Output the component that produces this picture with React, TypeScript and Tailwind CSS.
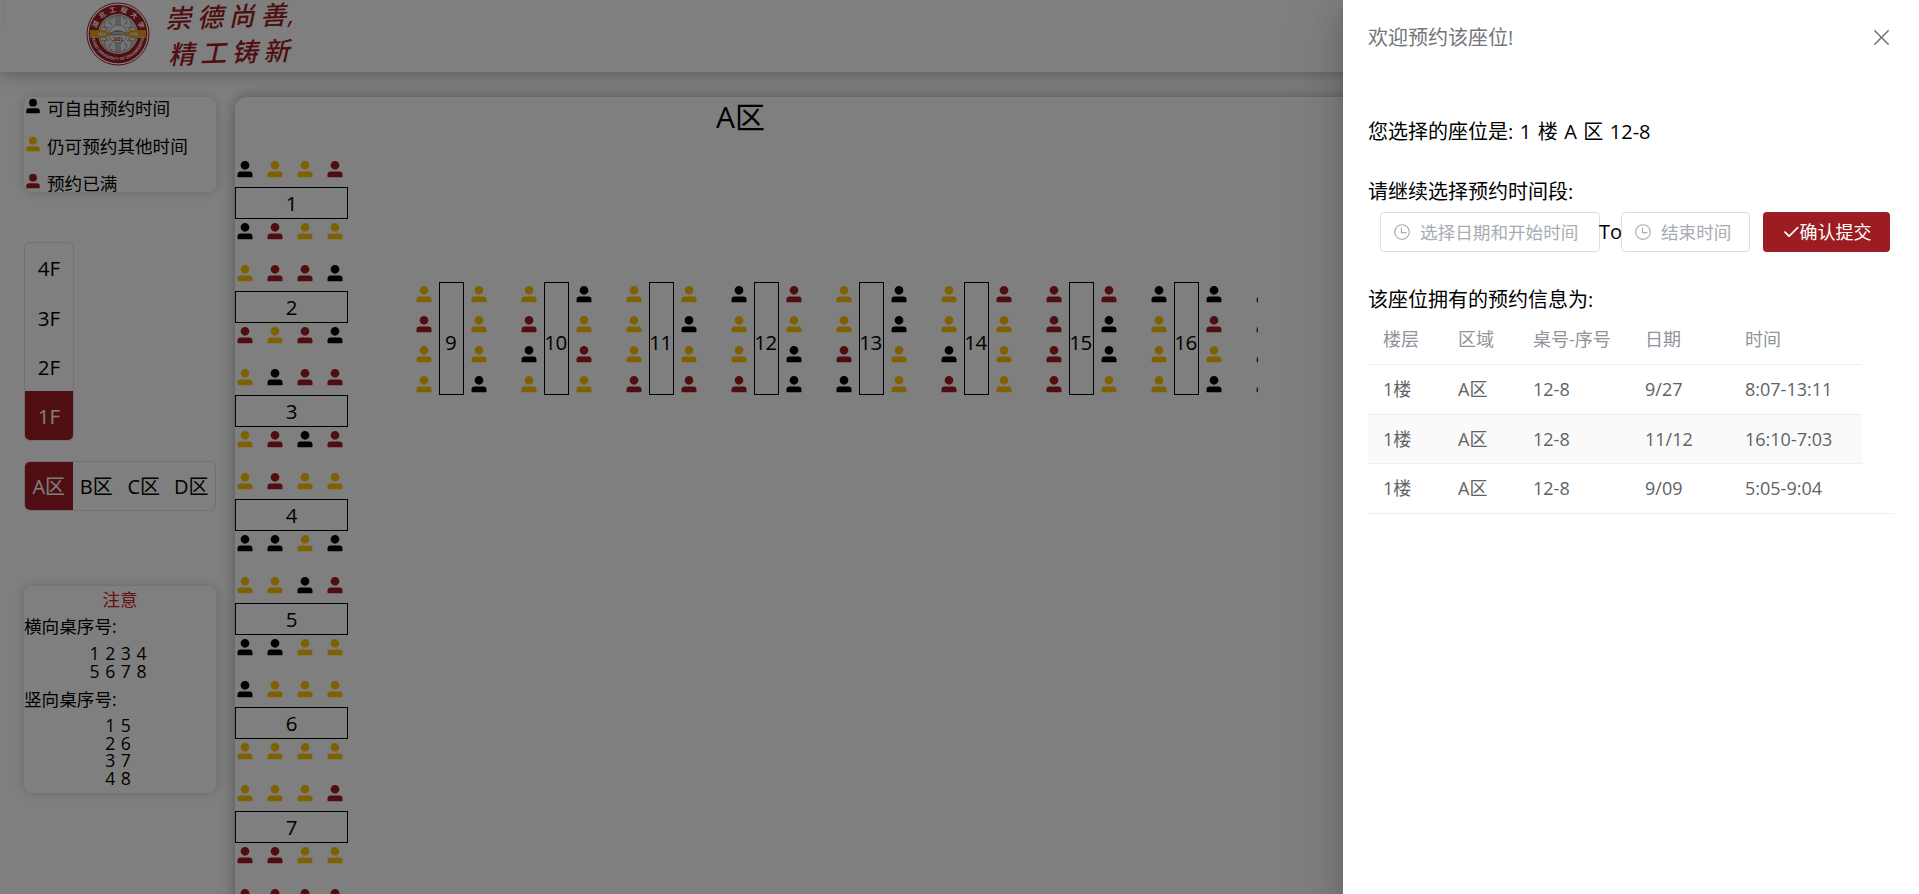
type Status = "k" | "y" | "r";

const STATUS_CLASS: Record<Status, string> = {
  k: "text-black",
  y: "text-[#ffc107]",
  r: "text-[#a01c24]",
};

const ROW_TABLES: [string, string][] = [
  ["kyyr", "kryy"],
  ["yrrk", "ryrk"],
  ["ykrr", "yrkr"],
  ["yryy", "kkyk"],
  ["yykr", "kkyy"],
  ["kyyy", "yyyy"],
  ["yyyr", "rryy"],
  ["rrrr", "yyyy"],
];

const COLUMN_TABLES: [string, string][] = [
  ["yryy", "yyyk"],
  ["yrky", "kyry"],
  ["yyyr", "ykyr"],
  ["kyyr", "rykk"],
  ["yyrk", "kkyy"],
  ["yykr", "ryyy"],
  ["rrrr", "rkky"],
  ["kyyy", "kryk"],
  ["rrrr", "yyyy"],
];

const BOOKINGS = [
  ["1楼", "A区", "12-8", "9/27", "8:07-13:11"],
  ["1楼", "A区", "12-8", "11/12", "16:10-7:03"],
  ["1楼", "A区", "12-8", "9/09", "5:05-9:04"],
];

function Person({ status, size = "size-5" }: { status: Status; size?: string }) {
  return (
    <svg viewBox="0 0 1024 1024" className={`${size} shrink-0 ${STATUS_CLASS[status]}`} fill="currentColor">
      <path d="M288 320a224 224 0 1 0 448 0 224 224 0 1 0-448 0zm544 608H160a32 32 0 0 1-32-32v-96a160 160 0 0 1 160-160h448a160 160 0 0 1 160 160v96a32 32 0 0 1-32 32z" />
    </svg>
  );
}

function Seats({ seats, vertical }: { seats: string; vertical?: boolean }) {
  return (
    <div className={vertical ? "flex flex-col gap-2.5 pt-0.5" : "flex gap-2.5"}>
      {seats.split("").map((s, i) => (
        <Person key={i} status={s as Status} />
      ))}
    </div>
  );
}

function Clock() {
  return (
    <svg viewBox="0 0 1024 1024" className="size-[18px] shrink-0" fill="currentColor">
      <path d="M512 896a384 384 0 1 0 0-768 384 384 0 0 0 0 768zm0 64a448 448 0 1 1 0-896 448 448 0 0 1 0 896z" />
      <path d="M480 256a32 32 0 0 1 32 32v256a32 32 0 0 1-64 0V288a32 32 0 0 1 32-32z" />
      <path d="M480 512h256q32 0 32 32t-32 32H480q-32 0-32-32t32-32z" />
    </svg>
  );
}

function Emblem() {
  return (
    <svg viewBox="0 0 64 64" className="size-16">
      <circle cx="32" cy="32" r="31" fill="#fff" stroke="#a01c24" strokeWidth="1" />
      <circle cx="32" cy="32" r="24.5" fill="none" stroke="#a01c24" strokeWidth="9.5" />
      <circle cx="32" cy="32" r="19.5" fill="#e4e4e0" />
      <g fill="none" stroke="#8f8f8b" strokeWidth="1">
        <circle cx="32" cy="32" r="18.5" />
        <circle cx="32" cy="32" r="9" />
        <path d="M30 14v9M32 14v9M34 14v9M30 41v9M32 41v9M34 41v9M27 16c-5 1-5 7-1 6M37 16c5 1 5 7 1 6M27 48c-5-1-5-7-1-6M37 48c5-1 5-7 1-6M20 20c-4 3 0 8 3 5M44 20c4 3 0 8-3 5M20 44c-4-3 0-8 3-5M44 44c4-3 0-8-3-5M16 26c3-2 6 0 5 2M48 26c-3-2-6 0-5 2M16 38c3 2 6 0 5-2M48 38c-3 2-6 0-5-2" />
      </g>
      <path d="M4 28h17v2h4v4h-4v2H4zM60 28H43v2h-4v4h4v2h17z" fill="#e8a020" />
      <path d="M12 30.500h8v3h-8zM44 30.500h8v3h-8z" fill="#d8cfa8" />
      <circle cx="32" cy="32" r="8.500" fill="#efefec" />
      <path d="M24 31q8-4 16 0v2H24zM28 29h8" fill="#b9b9b4" stroke="#77776f" strokeWidth=".8" />
      <text x="32" y="39" textAnchor="middle" fontSize="4.500" fontWeight="700" fill="#a01c24" fontFamily="Liberation Sans">1931</text>
      <defs>
        <path id="arc-top" d="M9.800 32a22.200 22.200 0 0 1 44.400 0" />
        <path id="arc-bottom" d="M5.700 32a26.300 26.300 0 0 0 52.600 0" />
      </defs>
      <text fontSize="6.500" fill="#fff" fontFamily="Noto Sans CJK SC" fontWeight="700" letterSpacing="3.900">
        <textPath href="#arc-top" startOffset="53%" textAnchor="middle">湖北工程大学</textPath>
      </text>
      <text fontSize="4.100" fill="#fff" fontFamily="Liberation Sans" fontWeight="700">
        <textPath href="#arc-bottom" startOffset="50%" textAnchor="middle">HUBEI UNIVERSITY OF ENGINEERING</textPath>
      </text>
    </svg>
  );
}

function Motto({ text, className }: { text: string[]; className: string }) {
  return (
    <div className={`flex h-9 -skew-x-12 -skew-y-2 text-[26px] leading-9 font-medium text-[#a01c24] ${className}`}>
      {text.map((c) => (
        <span key={c} className="w-[31.500px] whitespace-nowrap">{c}</span>
      ))}
    </div>
  );
}

function TimeInput({ className, placeholder }: { className: string; placeholder: string }) {
  return (
    <div className={`flex h-10 items-center gap-[9px] rounded border border-[#dcdfe6] pl-3 text-[17.6px] whitespace-nowrap text-[#a8abb2] ${className}`}>
      <Clock />
      <span className="leading-5">{placeholder}</span>
    </div>
  );
}

export default function App() {
  return (
    <div className="relative h-[894px] w-[1919px] overflow-hidden bg-white font-['Open_Sans','Noto_Sans_CJK_SC',sans-serif] text-black">
      <header className="flex h-[72px] items-start shadow-[0_2px_16px_rgba(0,0,0,0.3)]">
        <div className="h-[29px] w-[5px] rounded-br-md border-r border-b border-[#f0f0f0]" />
        <div className="pt-0.5 pl-[81px]">
          <Emblem />
        </div>
        <div className="pl-[18px]">
          <Motto text={["崇", "德", "尚", "善,"]} className="-mt-0.5" />
          <Motto text={["精", "工", "铸", "新"]} className="ml-[3px]" />
        </div>
      </header>

      <div className="flex items-start pt-[25px] pl-6">
        <aside className="w-48 shrink-0">
          <div className="h-[95px] rounded-lg text-[17.6px] shadow-[0_0_12px_rgba(0,0,0,0.2)]">
            {([["k", "可自由预约时间"], ["y", "仍可预约其他时间"], ["r", "预约已满"]] as const).map(([s, label]) => (
              <div key={s} className="flex h-[37.500px] items-start">
                <Person status={s} size="size-[18px]" />
                <span className="pl-[5px] leading-[23px]">{label}</span>
              </div>
            ))}
          </div>

          <div className="mt-[50px] flex h-[199px] w-[50px] flex-col overflow-hidden rounded-md border border-[#e2e2e6] text-[20.500px]">
            {["4F", "3F", "2F", "1F"].map((f) => (
              <div key={f} className={`flex flex-1 items-center justify-center pt-0.5 ${f === "1F" ? "bg-[#a01c24] text-white" : ""}`}>{f}</div>
            ))}
          </div>

          <div className="mt-5 flex h-[50px] overflow-hidden rounded-md border border-[#e2e2e6] text-xl">
            {["A区", "B区", "C区", "D区"].map((r) => (
              <div key={r} className={`flex flex-1 items-center justify-center pt-0.5 whitespace-nowrap ${r === "A区" ? "bg-[#a01c24] text-white" : ""}`}>{r}</div>
            ))}
          </div>

          <div className="mt-[75px] h-[207px] rounded-lg text-[17.6px] leading-[17.6px] shadow-[0_0_12px_rgba(0,0,0,0.2)]">
            <div className="pt-[3px] text-center leading-5 text-[#d0202a]">注意</div>
            <div className="pt-[7px] leading-5">横向桌序号:</div>
            <div className="pt-[9px] pr-1 text-center [word-spacing:1px]">1 2 3 4<br />5 6 7 8</div>
            <div className="pt-[9px] leading-5">竖向桌序号:</div>
            <div className="pt-2 pr-1 text-center [word-spacing:1px]">1 5<br />2 6<br />3 7<br />4 8</div>
          </div>
        </aside>

        <main className="ml-[19px] h-[900px] w-[1660px] shrink-0 rounded-xl shadow-[0_0_16px_rgba(0,0,0,0.35)]">
          <h1 className="w-[1011px] pt-0.5 text-center text-[30px] leading-9">A区</h1>
          <div className="flex w-[1023px] items-start overflow-hidden pt-6">
            <div className="flex w-[113px] shrink-0 flex-col gap-[22px]">
              {ROW_TABLES.map(([top, bottom], i) => (
                <div key={i} className="flex flex-col">
                  <Seats seats={top} />
                  <div className="mt-2 mb-0.5 flex h-8 items-center justify-center border border-black text-[20.500px]">{i + 1}</div>
                  <Seats seats={bottom} />
                </div>
              ))}
            </div>
            <div className="flex gap-[30px] pt-[123px] pl-[66px]">
              {COLUMN_TABLES.map(([left, right], i) => (
                <div key={i} className="flex gap-[5px]">
                  <Seats seats={left} vertical />
                  <div className="flex h-[113px] w-[25px] items-center justify-center border border-black pt-2 pr-0.5 text-[20.500px] tracking-[-0.5px]">{i + 9}</div>
                  <Seats seats={right} vertical />
                </div>
              ))}
            </div>
          </div>
        </main>
      </div>

      <div className="absolute inset-0 flex justify-end bg-black/50">
        <section className="h-full w-[576px] bg-white pl-[25px] shadow-[0_16px_48px_16px_rgba(0,0,0,0.08),0_12px_32px_rgba(0,0,0,0.12),0_8px_16px_-8px_rgba(0,0,0,0.16)]">
          <div className="flex h-[75px] items-center justify-between pr-[25px] text-xl text-[#72767b]">
            <span>欢迎预约该座位!</span>
            <svg viewBox="0 0 1024 1024" className="size-[25px]" fill="currentColor">
              <path d="M764.288 214.592 512 466.880 259.712 214.592a31.936 31.936 0 0 0-45.120 45.120L466.752 512 214.528 764.224a31.936 31.936 0 1 0 45.120 45.184L512 557.184l252.288 252.288a31.936 31.936 0 0 0 45.120-45.120L557.120 512.064l252.288-252.352a31.936 31.936 0 1 0-45.120-45.184z" />
            </svg>
          </div>
          <p className="pt-[42px] text-xl leading-[30px] [word-spacing:1.3px]">您选择的座位是: 1 楼 A 区 12-8</p>
          <p className="pt-[30px] text-xl leading-[30px]">请继续选择预约时间段:</p>
          <div className="flex items-center pt-[5px] pl-3">
            <TimeInput className="w-[220px]" placeholder="选择日期和开始时间" />
            <span className="flex w-[21px] justify-center text-xl">To</span>
            <TimeInput className="w-[129px]" placeholder="结束时间" />
            <button className="ml-[13px] flex h-10 w-[127px] items-center justify-center rounded bg-[#9d1c22] text-[18px] text-white">
              <svg viewBox="0 0 1024 1024" className="size-[18px]" fill="currentColor">
                <path d="M406.656 706.944 195.840 496.256a32 32 0 1 0-45.248 45.248l256 256 512-512a32 32 0 0 0-45.248-45.248L406.592 706.944z" stroke="currentColor" strokeWidth="50" />
              </svg>
              确认提交
            </button>
          </div>
          <p className="pt-[33px] text-xl leading-[30px]">该座位拥有的预约信息为:</p>
          <div className="w-[526px] border-b border-[#ebeef5] text-[18px] text-[#606266]">
            <div className="grid h-[50px] w-[494px] grid-cols-[75px_75px_112px_100px_1fr] items-center border-b border-[#ebeef5] pl-[15px] text-[#909399]">
              {["楼层", "区域", "桌号-序号", "日期", "时间"].map((h) => (
                <span key={h}>{h}</span>
              ))}
            </div>
            {BOOKINGS.map((row, i) => (
              <div key={i} className={`grid w-[494px] grid-cols-[75px_75px_112px_100px_1fr] items-center pl-[15px] ${i === 0 ? "h-[50px]" : "h-[49px]"} ${i < 2 ? "border-b border-[#ebeef5]" : ""} ${i === 1 ? "bg-[#fafafa]" : ""}`}>
                {row.map((cell, j) => (
                  <span key={j}>{cell}</span>
                ))}
              </div>
            ))}
          </div>
        </section>
      </div>
    </div>
  );
}
